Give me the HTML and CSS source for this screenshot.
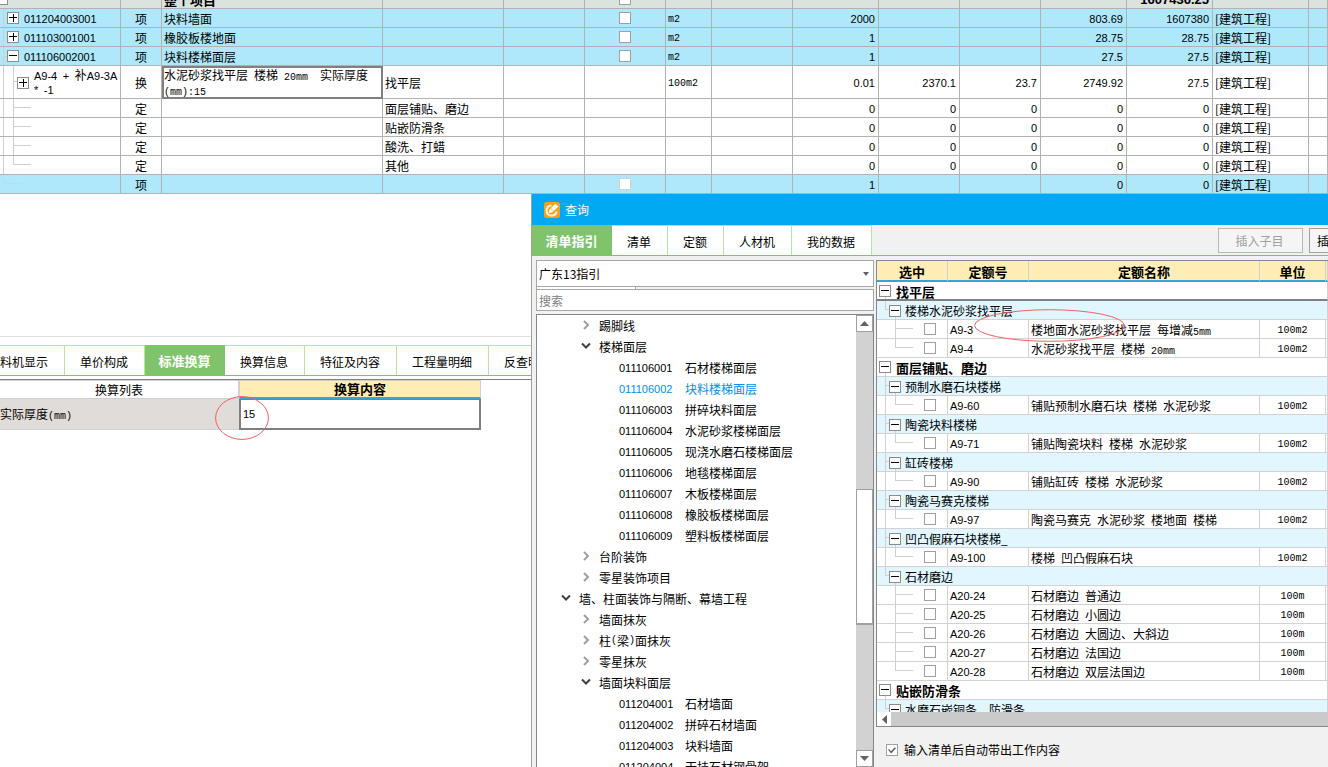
FILE: index.html
```html
<!DOCTYPE html>
<html lang="zh-CN">
<head>
<meta charset="utf-8">
<title>查询</title>
<link rel="stylesheet" href="styles.css">
</head>
<body>
<main class="app">
<table class="bill">
<colgroup><col class="c1"><col class="c2"><col class="c3"><col class="c4"><col class="c5"><col class="c5"><col class="c6"><col class="c5"><col class="c7"><col class="c5"><col class="c5"><col class="c7"><col class="c7"><col class="c8"><col></colgroup>
<tbody>
<tr class="total"><td><button class="toggle cut" aria-label="折叠"></button></td><td></td><td>整个项目</td><td></td><td></td><td class="mid"><input type="checkbox" aria-label="整个项目"></td><td></td><td></td><td></td><td></td><td></td><td></td><td class="num">1607436.25</td><td></td><td></td></tr>
<tr class="item"><td class="code t1"><button class="toggle plus" aria-label="展开"></button>011204003001</td><td class="mid">项</td><td>块料墙面</td><td></td><td></td><td class="mid"><input type="checkbox" aria-label="块料墙面"></td><td class="unit">m2</td><td></td><td class="num">2000</td><td></td><td></td><td class="num">803.69</td><td class="num">1607380</td><td>[建筑工程]</td><td></td></tr>
<tr class="item"><td class="code t1"><button class="toggle plus" aria-label="展开"></button>011103001001</td><td class="mid">项</td><td>橡胶板楼地面</td><td></td><td></td><td class="mid"><input type="checkbox" aria-label="橡胶板楼地面"></td><td class="unit">m2</td><td></td><td class="num">1</td><td></td><td></td><td class="num">28.75</td><td class="num">28.75</td><td>[建筑工程]</td><td></td></tr>
<tr class="item"><td class="code t1"><button class="toggle" aria-label="折叠"></button>011106002001</td><td class="mid">项</td><td>块料楼梯面层</td><td></td><td></td><td class="mid"><input type="checkbox" aria-label="块料楼梯面层"></td><td class="unit">m2</td><td></td><td class="num">1</td><td></td><td></td><td class="num">27.5</td><td class="num">27.5</td><td>[建筑工程]</td><td></td></tr>
<tr class="tall"><td class="code t2"><div class="node"><button class="toggle plus" aria-label="展开"></button><span>A9-4&ensp;+&ensp;<span class="han">补</span>A9-3A<br>*&ensp;-1</span></div></td><td class="mid">换</td><td class="selected">水泥砂浆找平层&ensp;楼梯&ensp;<span class="mono">20mm</span>&ensp;&ensp;实际厚度<br><span class="mono">(mm):15</span></td><td>找平层</td><td></td><td></td><td class="unit">100m2</td><td></td><td class="num">0.01</td><td class="num">2370.1</td><td class="num">23.7</td><td class="num">2749.92</td><td class="num">27.5</td><td>[建筑工程]</td><td></td></tr>
<tr><td class="leaf"></td><td class="mid">定</td><td></td><td>面层铺贴、磨边</td><td></td><td></td><td></td><td></td><td class="num">0</td><td class="num">0</td><td class="num">0</td><td class="num">0</td><td class="num">0</td><td>[建筑工程]</td><td></td></tr>
<tr><td class="leaf"></td><td class="mid">定</td><td></td><td>贴嵌防滑条</td><td></td><td></td><td></td><td></td><td class="num">0</td><td class="num">0</td><td class="num">0</td><td class="num">0</td><td class="num">0</td><td>[建筑工程]</td><td></td></tr>
<tr><td class="leaf"></td><td class="mid">定</td><td></td><td>酸洗、打蜡</td><td></td><td></td><td></td><td></td><td class="num">0</td><td class="num">0</td><td class="num">0</td><td class="num">0</td><td class="num">0</td><td>[建筑工程]</td><td></td></tr>
<tr><td class="leaf end"></td><td class="mid">定</td><td></td><td>其他</td><td></td><td></td><td></td><td></td><td class="num">0</td><td class="num">0</td><td class="num">0</td><td class="num">0</td><td class="num">0</td><td>[建筑工程]</td><td></td></tr>
<tr class="item"><td class="root-end"></td><td class="mid">项</td><td></td><td></td><td></td><td class="mid"><input type="checkbox" disabled aria-label="空项"></td><td></td><td></td><td class="num">1</td><td></td><td></td><td class="num">0</td><td class="num">0</td><td>[建筑工程]</td><td></td></tr>
</tbody>
</table>

<section class="detail">
<nav class="tabs">
<button class="tab first">料机显示</button><button class="tab">单价构成</button><button class="tab active">标准换算</button><button class="tab">换算信息</button><button class="tab">特征及内容</button><button class="tab">工程量明细</button><button class="tab">反查明细</button>
</nav>
<div class="convert">
<table>
<colgroup><col class="k1"><col></colgroup>
<thead><tr><th>换算列表</th><th class="current">换算内容</th></tr></thead>
<tbody><tr><td><label for="thick">实际厚度<span class="mono">(mm)</span></label></td><td><input id="thick" type="text" value="15"></td></tr></tbody>
</table>
<svg class="mark small" viewBox="0 0 54 44" aria-hidden="true"><ellipse cx="27" cy="22" rx="26.400" ry="21.400"/></svg>
</div>
</section>

<section class="dialog">
<header class="title">
<svg width="16" height="16" viewBox="0 0 16 16" aria-hidden="true"><rect width="16" height="16" rx="2.500" fill="#f9a11b"/><path d="M7.500 3.200Q2.600 4 2.600 8.500Q2.600 13.600 7.500 13.600Q12 13.400 12.600 9.500" fill="none" stroke="#fff3dc" stroke-width="2"/><path d="M4.600 11.200L5.600 7.600L11.300 1.800L14.400 4.600L8.400 10.300Z" fill="#fff"/><path d="M6.600 6.400L9.600 9.300" stroke="#f9a11b" stroke-width=".7"/></svg>
<span>查询</span>
</header>
<div class="toolbar">
<nav class="tabs">
<button class="tab active">清单指引</button><button class="tab">清单</button><button class="tab">定额</button><button class="tab">人材机</button><button class="tab">我的数据</button>
</nav>
<div class="actions"><button class="action" disabled>插入子目</button><button class="action">插入清单</button></div>
</div>
<div class="content">
<div class="guide">
<div class="picker"><select aria-label="指引"><option>广东13指引</option></select><svg width="6" height="4" viewBox="0 0 6 4" aria-hidden="true"><path d="M0 0H6L3 4Z" fill="#606070"/></svg></div>
<div class="stub"></div>
<input class="search" type="text" placeholder="搜索" aria-label="搜索">
<div class="treebox">
<ul class="tree">
<li class="l2"><svg class="chev" viewBox="0 0 10 10"><path d="M3 1L7 5L3 9"/></svg>踢脚线</li>
<li class="l2"><svg class="chev open" viewBox="0 0 10 10"><path d="M1 2.500L5 6.500L9 2.500"/></svg>楼梯面层</li>
<li class="l3"><span class="id">011106001</span>石材楼梯面层</li>
<li class="l3 chosen"><span class="id">011106002</span>块料楼梯面层</li>
<li class="l3"><span class="id">011106003</span>拼碎块料面层</li>
<li class="l3"><span class="id">011106004</span>水泥砂浆楼梯面层</li>
<li class="l3"><span class="id">011106005</span>现浇水磨石楼梯面层</li>
<li class="l3"><span class="id">011106006</span>地毯楼梯面层</li>
<li class="l3"><span class="id">011106007</span>木板楼梯面层</li>
<li class="l3"><span class="id">011106008</span>橡胶板楼梯面层</li>
<li class="l3"><span class="id">011106009</span>塑料板楼梯面层</li>
<li class="l2"><svg class="chev" viewBox="0 0 10 10"><path d="M3 1L7 5L3 9"/></svg>台阶装饰</li>
<li class="l2"><svg class="chev" viewBox="0 0 10 10"><path d="M3 1L7 5L3 9"/></svg>零星装饰项目</li>
<li class="l1"><svg class="chev open" viewBox="0 0 10 10"><path d="M1 2.500L5 6.500L9 2.500"/></svg>墙、柱面装饰与隔断、幕墙工程</li>
<li class="l2"><svg class="chev" viewBox="0 0 10 10"><path d="M3 1L7 5L3 9"/></svg>墙面抹灰</li>
<li class="l2"><svg class="chev" viewBox="0 0 10 10"><path d="M3 1L7 5L3 9"/></svg>柱<span class="mono">(</span>梁<span class="mono">)</span>面抹灰</li>
<li class="l2"><svg class="chev" viewBox="0 0 10 10"><path d="M3 1L7 5L3 9"/></svg>零星抹灰</li>
<li class="l2"><svg class="chev open" viewBox="0 0 10 10"><path d="M1 2.500L5 6.500L9 2.500"/></svg>墙面块料面层</li>
<li class="l3"><span class="id">011204001</span>石材墙面</li>
<li class="l3"><span class="id">011204002</span>拼碎石材墙面</li>
<li class="l3"><span class="id">011204003</span>块料墙面</li>
<li class="l3"><span class="id">011204004</span>干挂石材钢骨架</li>
</ul>
<div class="vbar"><button class="arrow" aria-label="向上"><svg width="9" height="5" viewBox="0 0 9 5"><path d="M4.500 0L9 5H0Z"/></svg></button><div class="before"></div><div class="thumb"></div><div class="after"></div><button class="arrow" aria-label="向下"><svg width="9" height="5" viewBox="0 0 9 5"><path d="M0 0H9L4.500 5Z"/></svg></button></div>
</div>
</div>

<div class="quota">
<div class="gridbox">
<div class="gridview">
<table class="grid">
<colgroup><col class="g1"><col class="g2"><col><col class="g4"><col class="g5"></colgroup>
<thead><tr><th>选中</th><th>定额号</th><th>定额名称</th><th>单位</th><th></th></tr></thead>
<tbody>
<tr class="chapter focus"><td colspan="5"><button class="toggle" aria-label="折叠"></button>找平层</td></tr>
<tr class="group last"><td colspan="5"><button class="toggle" aria-label="折叠"></button>楼梯水泥砂浆找平层</td></tr>
<tr><td class="pick"><input type="checkbox" aria-label="A9-3"></td><td class="code">A9-3</td><td>楼地面水泥砂浆找平层&ensp;每增减<span class="mono">5mm</span></td><td class="unit mid">100m2</td><td></td></tr>
<tr><td class="pick end"><input type="checkbox" aria-label="A9-4"></td><td class="code">A9-4</td><td>水泥砂浆找平层&ensp;楼梯&ensp;<span class="mono">20mm</span></td><td class="unit mid">100m2</td><td></td></tr>
<tr class="chapter"><td colspan="5"><button class="toggle" aria-label="折叠"></button>面层铺贴、磨边</td></tr>
<tr class="group"><td colspan="5"><button class="toggle" aria-label="折叠"></button>预制水磨石块楼梯</td></tr>
<tr><td class="pick end outer"><input type="checkbox" aria-label="A9-60"></td><td class="code">A9-60</td><td>铺贴预制水磨石块&ensp;楼梯&ensp;水泥砂浆</td><td class="unit mid">100m2</td><td></td></tr>
<tr class="group"><td colspan="5"><button class="toggle" aria-label="折叠"></button>陶瓷块料楼梯</td></tr>
<tr><td class="pick end outer"><input type="checkbox" aria-label="A9-71"></td><td class="code">A9-71</td><td>铺贴陶瓷块料&ensp;楼梯&ensp;水泥砂浆</td><td class="unit mid">100m2</td><td></td></tr>
<tr class="group"><td colspan="5"><button class="toggle" aria-label="折叠"></button>缸砖楼梯</td></tr>
<tr><td class="pick end outer"><input type="checkbox" aria-label="A9-90"></td><td class="code">A9-90</td><td>铺贴缸砖&ensp;楼梯&ensp;水泥砂浆</td><td class="unit mid">100m2</td><td></td></tr>
<tr class="group"><td colspan="5"><button class="toggle" aria-label="折叠"></button>陶瓷马赛克楼梯</td></tr>
<tr><td class="pick end outer"><input type="checkbox" aria-label="A9-97"></td><td class="code">A9-97</td><td>陶瓷马赛克&ensp;水泥砂浆&ensp;楼地面&ensp;楼梯</td><td class="unit mid">100m2</td><td></td></tr>
<tr class="group"><td colspan="5"><button class="toggle" aria-label="折叠"></button>凹凸假麻石块楼梯_</td></tr>
<tr><td class="pick end outer"><input type="checkbox" aria-label="A9-100"></td><td class="code">A9-100</td><td>楼梯&ensp;凹凸假麻石块</td><td class="unit mid">100m2</td><td></td></tr>
<tr class="group last"><td colspan="5"><button class="toggle" aria-label="折叠"></button>石材磨边</td></tr>
<tr><td class="pick"><input type="checkbox" aria-label="A20-24"></td><td class="code">A20-24</td><td>石材磨边&ensp;普通边</td><td class="unit mid">100m</td><td></td></tr>
<tr><td class="pick"><input type="checkbox" aria-label="A20-25"></td><td class="code">A20-25</td><td>石材磨边&ensp;小圆边</td><td class="unit mid">100m</td><td></td></tr>
<tr><td class="pick"><input type="checkbox" aria-label="A20-26"></td><td class="code">A20-26</td><td>石材磨边&ensp;大圆边、大斜边</td><td class="unit mid">100m</td><td></td></tr>
<tr><td class="pick"><input type="checkbox" aria-label="A20-27"></td><td class="code">A20-27</td><td>石材磨边&ensp;法国边</td><td class="unit mid">100m</td><td></td></tr>
<tr><td class="pick end"><input type="checkbox" aria-label="A20-28"></td><td class="code">A20-28</td><td>石材磨边&ensp;双层法国边</td><td class="unit mid">100m</td><td></td></tr>
<tr class="chapter"><td colspan="5"><button class="toggle" aria-label="折叠"></button>贴嵌防滑条</td></tr>
<tr class="group last"><td colspan="5"><button class="toggle" aria-label="折叠"></button>水磨石嵌铜条、防滑条</td></tr>
</tbody>
</table>
</div>
<div class="hbar"><button aria-label="向左"><svg width="5" height="9" viewBox="0 0 5 9"><path d="M5 0V9L0 4.500Z"/></svg></button></div>
<svg class="mark large" viewBox="0 0 152 33" aria-hidden="true"><ellipse cx="76" cy="16.500" rx="75.400" ry="15.900"/></svg>
</div>
<label class="option"><input type="checkbox" checked>输入清单后自动带出工作内容</label>
</div>
</div>
</section>
</main>
</body>
</html>
```

FILE: styles.css
```css
* { box-sizing: border-box; }
body { margin: 0; background: #fff; color: #000; font: 12px/18px "Noto Sans CJK SC", sans-serif; }
button, input, select { font: inherit; color: inherit; margin: 0; padding: 0; border-radius: 0; }
.app { position: relative; height: 100vh; overflow: hidden; }

table { border-collapse: separate; border-spacing: 0; table-layout: fixed; }
td, th { padding: 0; white-space: nowrap; overflow: hidden; text-align: left; }
.mono { font: 10px/1 "Liberation Mono", monospace; }
.code, .num, .id { font-family: "Liberation Sans", "Noto Sans CJK SC", sans-serif; font-size: 11px; }
.han { font-size: 12px; line-height: 1; }

input[type="checkbox"] { appearance: none; display: block; width: 12px; height: 12px; border: 1px solid #a0a0a0; background: #fff; }
input[type="checkbox"]:disabled { border-color: #d0d0d0; }
.toggle { flex: none; width: 12px; height: 12px; border: 1px solid #8c8c8c; vertical-align: middle;
  background: linear-gradient(#000, #000) 1px 4px / 8px 1px no-repeat #fff; }
.toggle.plus { background: linear-gradient(#000, #000) 1px 4px / 8px 1px no-repeat, linear-gradient(#000, #000) 5px 1px / 1px 8px no-repeat #fff; }

/* shared cells */
.bill td, .grid td { height: 19px; padding: 2px 0 0 2px; line-height: 16px; border: solid #b2b2b2; border-width: 0 1px 1px 0; }
.bill .mid, .grid .mid { padding-left: 0; text-align: center; }
.bill .unit, .grid .unit { font-family: "Liberation Mono", monospace; font-size: 10px; padding-top: 3px; line-height: 15px; }
.bill .mid input { margin: -2px auto 0; }

/* bill of quantities */
.bill { width: 100%; margin-top: -10px; }
.bill .num { text-align: right; padding-right: 3px; }
.c1 { width: 121px; } .c2 { width: 41px; } .c3 { width: 221px; } .c4 { width: 121px; }
.c5 { width: 81px; } .c6 { width: 46px; } .c7 { width: 86px; } .c8 { width: 96px; }
.bill .total td { background: #dbe3de; font-weight: bold; font-size: 13px; }
.total .toggle.cut { margin: -4px 0 0 -6px; }
.item td { background-color: #aee8fa; }
.bill .t1 { padding-left: 7px; background-image: linear-gradient(#d0d0d0, #d0d0d0), linear-gradient(#d0d0d0, #d0d0d0); background-position: 3px 0, 3px 9px; background-size: 1px 100%, 4px 1px; background-repeat: no-repeat; }
.t1 .toggle { margin: -4px 5px 0 0; }
.bill .t2, .bill .leaf { background-image: linear-gradient(#d0d0d0, #d0d0d0), linear-gradient(#d0d0d0, #d0d0d0), linear-gradient(#d0d0d0, #d0d0d0); background-position: 3px 0, 13px 0, 13px 8px; background-size: 1px 100%, 1px 100%, 18px 1px; background-repeat: no-repeat; }
.bill .t2 { padding-left: 17px; background-position: 3px 0, 13px 0, 13px 15px; background-size: 1px 100%, 1px 100%, 4px 1px; }
.bill .leaf.end { background-size: 1px 100%, 1px 9px, 18px 1px; }
.bill .root-end { background-image: linear-gradient(#b8dfe9, #b8dfe9), linear-gradient(#b8dfe9, #b8dfe9); background-position: 3px 0, 3px 8px; background-size: 1px 9px, 18px 1px; background-repeat: no-repeat; }
.bill .tall td { height: 33px; line-height: 14px; }
.node { display: flex; align-items: center; gap: 5px; }
.bill .selected { outline: 2px solid #808080; outline-offset: -2px; }

/* tabs */
.tabs { display: flex; }
.tab { flex: none; height: 30px; padding: 2px 16px 0 15px; border: 0; border-right: 1px solid #b4e6a0; border-top: 1px solid #b4e6a0; background: #fff; white-space: nowrap; }
.tab.active { width: 80px; padding: 0; background: #7fc46a; border-color: #7fc46a; color: #fff; font-weight: bold; font-size: 13px; }
.tab.first { padding-left: 0; }

/* conversion pane */
.detail { margin-top: 142px; border-top: 1px solid #e0e0e0; padding-top: 8px; }
.detail > .tabs { border-bottom: 1px solid #7fc46a; }
.convert { position: relative; margin-top: 3px; border-top: 1px solid #808080; }
.convert table { width: 481px; }
.k1 { width: 239px; }
.convert th { height: 19px; line-height: 16px; font-weight: normal; text-align: center; border: 1px solid #d0d0d0; border-left: 0; }
.convert th.current { background: #ffedb6; font-weight: bold; font-size: 13px; border-bottom: 2px solid #35a5d5; border-left: 1px solid #d0d0d0; }
.convert td { height: 31px; background: #e0dcda; border-bottom: 1px solid #d0d0d0; }
.convert td:last-child { border: 0; }
.convert input { display: block; width: 100%; height: 31px; border: 2px solid #808080; border-top-width: 1px; padding: 0 2px; background: #fff; font-family: "Liberation Sans", sans-serif; font-size: 11px; }
.mark { position: absolute; fill: none; stroke: #f06060; stroke-width: 1; overflow: visible; }
.mark.small { left: 215px; top: 16px; width: 54px; height: 44px; }

/* query window */
.dialog { position: absolute; left: 531px; right: 0; top: 194px; bottom: 0; display: flex; flex-direction: column; border-left: 1px solid #a0a0a0; background: #f1f1f1; overflow: hidden; }
.title { display: flex; align-items: center; gap: 5px; height: 31px; padding-left: 12px; background: #00a9f2; color: #fff; }
.toolbar { display: flex; justify-content: space-between; height: 31px; border-bottom: 1px solid #7fc46a; }
.actions { display: flex; gap: 6px; width: 110px; padding-top: 3px; overflow: hidden; }
.action { flex: none; width: 85px; height: 25px; padding-right: 2px; border: 1px solid #a0a0a0; background: #f5f5f5; }
.action:last-child { width: 66px; }
.action:disabled { color: #a0a0a0; border-color: #b8b8b8; }
.content { flex: 1; min-height: 0; display: flex; gap: 2px; padding: 4px 0 0 4px; }
.guide { flex: none; width: 338px; display: flex; flex-direction: column; }
.picker { position: relative; flex: none; height: 27px; }
.picker select { appearance: none; width: 100%; height: 27px; border: 1px solid #a8a8a8; background: #fff; padding-left: 2px; }
.picker svg { position: absolute; right: 5px; top: 12px; pointer-events: none; }
.stub { flex: none; width: 100px; height: 2px; border: solid #a8a8a8; border-width: 0 1px; background: #fff; }
.search { flex: none; height: 22px; border: 1px solid #a8a8a8; background: #fff; padding-left: 2px; }
.search::placeholder { color: #808080; opacity: 1; }
.treebox { flex: 1; min-height: 0; display: flex; margin-top: 3px; border: 1px solid #828790; border-bottom: 0; background: #fff; }
.tree { flex: 1; min-width: 0; margin: 0; padding: 0; list-style: none; overflow: hidden; }
.tree li { display: flex; align-items: center; height: 21px; padding-top: 1px; white-space: nowrap; }
.tree .l1 { padding-left: 25px; }
.tree .l2 { padding-left: 45px; }
.tree .l3 { padding-left: 82px; }
.tree .chosen { color: #0090f0; }
.id { width: 66px; }
.chev { width: 10px; height: 10px; margin: 0 8px 2px 0; margin-left: -1px; fill: none; stroke: #a0a0a0; stroke-width: 2; }
.chev.open { stroke: #404040; }
.vbar { flex: none; width: 17px; display: flex; flex-direction: column; background: #d2d2d2; }
.arrow { display: flex; align-items: center; justify-content: center; height: 17px; flex: none; border: 1px solid #a0a0a0; background: #fff; }
.arrow svg, .hbar svg { fill: #606070; }
.before { flex: 158; }
.thumb { flex: 134; background: #fff; border: 1px solid #a0a0a0; border-width: 1px 1px 2px; }
.after { flex: 126; }

.quota { flex: 1; min-width: 0; display: flex; flex-direction: column; }
.gridbox { position: relative; flex: 1; min-height: 0; display: flex; flex-direction: column; border: 1px solid #828790; border-right: 0; background: #fff; }
.gridview { flex: 1; min-height: 0; overflow: hidden; }
.grid { width: 100%; }
.g1 { width: 71px; } .g2 { width: 81px; } .g4 { width: 66px; } .g5 { width: 2px; }
.grid th { height: 21px; padding-top: 2px; line-height: 16px; text-align: center; font-size: 13px; background: #ffedb6; border-right: 1px solid #d0d0d0; border-bottom: 2px solid #35a5d5; }
.grid td { border-color: #d2d2d2; }
.grid .chapter td { font-weight: bold; font-size: 13px; background: linear-gradient(#d0d0d0, #d0d0d0) 8px 15px / 1px 4px no-repeat; }
.grid .focus td { border-bottom: 2px solid #808080; line-height: 15px; }
.chapter .toggle { margin: -4px 5px 0 0; }
.grid .group td { padding-left: 12px; background: linear-gradient(#d0d0d0, #d0d0d0) 8px 0 / 1px 100% no-repeat, linear-gradient(#d0d0d0, #d0d0d0) 8px 8px / 4px 1px no-repeat, linear-gradient(#d0d0d0, #d0d0d0) 18px 15px / 1px 4px no-repeat #e1f6ff; }
.grid .group.last td { background-size: 1px 9px, 4px 1px, 1px 4px; }
.group .toggle { margin: -4px 4px 0 0; }
.grid .pick { padding-left: 47px; background-image: linear-gradient(#d0d0d0, #d0d0d0), linear-gradient(#d0d0d0, #d0d0d0); background-position: 18px 0, 18px 8px; background-size: 1px 100%, 18px 1px; background-repeat: no-repeat; }
.grid .pick.end { background-size: 1px 9px, 18px 1px; }
.grid .pick.outer { background-image: linear-gradient(#d0d0d0, #d0d0d0), linear-gradient(#d0d0d0, #d0d0d0), linear-gradient(#d0d0d0, #d0d0d0); background-position: 18px 0, 18px 8px, 8px 0; background-size: 1px 9px, 18px 1px, 1px 100%; }
.grid .pick input { margin-top: -2px; }
.hbar { flex: none; height: 14px; background: #cacaca; }
.hbar button { display: flex; align-items: center; justify-content: center; width: 14px; height: 14px; border: 0; background: #fff; }
.mark.large { left: 97px; top: 48px; width: 151px; height: 33px; }
.option { flex: none; display: flex; align-items: center; gap: 6px; height: 40px; padding: 6px 0 0 10px; }
.option input::before { content: ""; display: block; width: 8px; height: 7px; margin: 2px 0 0 1px; background: #606070; clip-path: polygon(0 40%, 14% 28%, 38% 62%, 86% 4%, 100% 18%, 40% 92%); }
```
